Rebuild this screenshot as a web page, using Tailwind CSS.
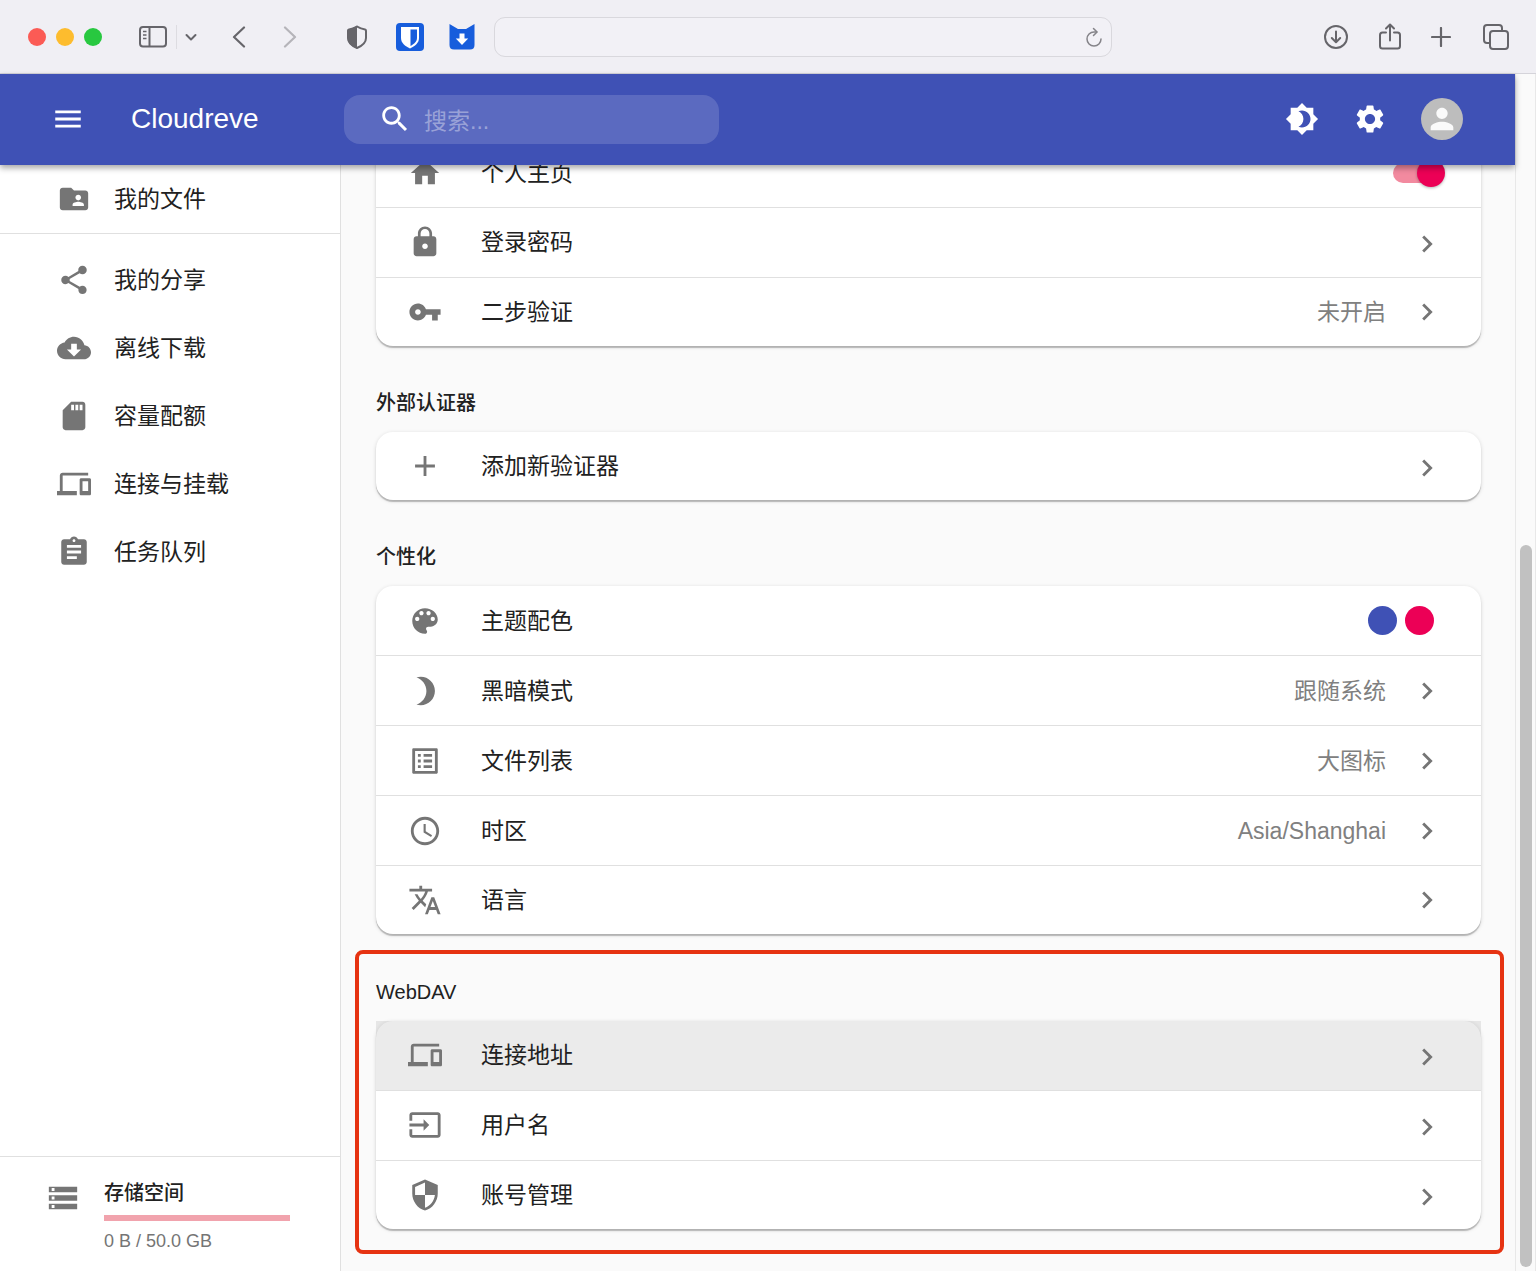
<!DOCTYPE html>
<html lang="zh-CN">
<head>
    <meta charset="UTF-8">
    <meta name="viewport" content="width=device-width, initial-scale=1.0">
    <title>Cloudreve</title>
    <script src="https://cdn.jsdelivr.net/npm/@tailwindcss/browser@4"></script>
</head>
<body class="h-screen flex flex-col overflow-hidden bg-[#fafafa] text-[#212121] text-[23px] leading-8 font-['Liberation_Sans','Noto_Sans_CJK_SC',sans-serif]">
<!-- 公用图标 -->
<svg class="hidden">
    <symbol id="next" viewBox="0 0 24 24"><path d="M10 6L8.59 7.41 13.17 12l-4.58 4.59L10 18l6-6z"/></symbol>
    <symbol id="devices" viewBox="0 0 24 24"><path d="M4 6h18V4H4c-1.1 0-2 .9-2 2v11H0v3h14v-3H4V6zm19 2h-6c-.55 0-1 .45-1 1v10c0 .55.45 1 1 1h6c.55 0 1-.45 1-1V9c0-.55-.45-1-1-1zm-1 9h-4v-7h4v7z"/></symbol>
</svg>

<!-- 浏览器工具栏 -->
<div class="h-[74px] shrink-0 flex items-center pl-7 pr-[27px] bg-[#f0eff4] border-b border-[#d5d4da] text-[#66656a]">
    <div class="flex gap-[10px]">
        <span class="size-[18px] rounded-full bg-[#fb5b55]"></span>
        <span class="size-[18px] rounded-full bg-[#fdbc2e]"></span>
        <span class="size-[18px] rounded-full bg-[#28c840]"></span>
    </div>
    <button class="ml-[37px]" aria-label="边栏">
        <svg class="w-7 h-6" viewBox="0 0 28 24" fill="none" stroke="currentColor" stroke-width="2"><rect x="1" y="2" width="26" height="19.500" rx="3"/><path d="M10.500 2v19.500"/><path d="M4 6.500h3.500M4 10h3.500M4 13.500h3.500" stroke-width="1.500"/></svg>
    </button>
    <span class="ml-[9px] w-px h-6 bg-[#dddce1]"></span>
    <button class="ml-2" aria-label="标签页组">
        <svg class="w-3 h-3" viewBox="0 0 12 12" fill="none" stroke="currentColor" stroke-width="2" stroke-linecap="round" stroke-linejoin="round"><path d="M1.500 4L6 8.500 10.500 4"/></svg>
    </button>
    <button class="ml-[35px]" aria-label="后退">
        <svg class="w-[14px] h-[22px]" viewBox="0 0 14 22" fill="none" stroke="currentColor" stroke-width="2.200" stroke-linecap="round" stroke-linejoin="round"><path d="M12 1.500L2 11l10 9.500"/></svg>
    </button>
    <button class="ml-[37px] text-[#b5b4b9]" aria-label="前进">
        <svg class="w-[14px] h-[22px]" viewBox="0 0 14 22" fill="none" stroke="currentColor" stroke-width="2.200" stroke-linecap="round" stroke-linejoin="round"><path d="M2 1.500L12 11 2 20.500"/></svg>
    </button>
    <button class="ml-[49px]" aria-label="隐私报告">
        <svg class="w-[22px] h-6" viewBox="0 0 22 24"><path d="M11 1.500c2.500 1.600 5 2.600 8 3 .7.200 1 .6 1 1.300V13c0 5-3.800 7.800-9 10-5.200-2.200-9-5-9-10V5.800c0-.7.300-1.100 1-1.300 3-.4 5.500-1.400 8-3z" fill="none" stroke="currentColor" stroke-width="2"/><path d="M11 1v22.500C5 21 1.500 18 1.500 13V5z" fill="currentColor"/></svg>
    </button>
    <button class="ml-7" aria-label="Bitwarden">
        <svg class="size-7" viewBox="0 0 28 28"><rect width="28" height="28" rx="4" fill="#175ddc"/><path d="M5 4h18v11c0 5-4 8-9 10.500C9 23 5 20 5 15z" fill="#fff"/><path d="M14.500 6.500H21V15c0 3.500-2.800 5.800-6.500 8z" fill="#175ddc"/></svg>
    </button>
    <button class="ml-6" aria-label="下载器">
        <svg class="size-7" viewBox="0 0 28 28"><path d="M1.500 1l8.500 5h8l8.500-5v21c0 3-1.500 4.500-4.500 4.500H6C3 26.500 1.500 25 1.500 22z" fill="#175ddc"/><path d="M11.500 10.500h5v5h3.700L14 22l-6.200-6.500h3.700z" fill="#fff"/></svg>
    </button>
    <div class="ml-[18px] flex-1 h-10 flex items-center pr-[9px] rounded-[11px] border border-[#d9d8dd] bg-[#f2f1f6]">
        <input type="text" aria-label="地址" class="flex-1 min-w-0 h-full px-4 text-base outline-none">
        <button aria-label="重新载入">
            <svg class="w-4 h-5" viewBox="0 0 16 20" fill="none" stroke="#858489" stroke-width="1.500" stroke-linecap="round"><path d="M15 12a7 7 0 1 1-7-7h2.500"/><path d="M7.500 1.500L11 5 7.500 8.500"/></svg>
        </button>
    </div>
    <div class="ml-[211px] flex items-center">
        <button aria-label="下载">
            <svg class="size-[26px]" viewBox="0 0 26 26" fill="none" stroke="currentColor" stroke-width="2" stroke-linecap="round" stroke-linejoin="round"><circle cx="13" cy="13" r="11"/><path d="M13 7.500v10.500M8.800 14l4.200 4.200 4.200-4.200"/></svg>
        </button>
        <button class="ml-[29px]" aria-label="共享">
            <svg class="w-6 h-7" viewBox="0 0 24 28" fill="none" stroke="currentColor" stroke-width="2" stroke-linecap="round" stroke-linejoin="round"><path d="M8 9.500H4.500c-1.700 0-2.500.8-2.500 2.500v11c0 1.700.8 2.500 2.500 2.500h15c1.700 0 2.500-.8 2.500-2.500V12c0-1.700-.8-2.500-2.500-2.500H16"/><path d="M12 17.500V1.500M8 5.500l4-4 4 4"/></svg>
        </button>
        <button class="ml-[29px]" aria-label="新建标签页">
            <svg class="size-5" viewBox="0 0 20 20" fill="none" stroke="currentColor" stroke-width="2.200" stroke-linecap="round"><path d="M10 1v18M1 10h18"/></svg>
        </button>
        <button class="ml-8" aria-label="标签页概览">
            <svg class="size-[26px]" viewBox="0 0 26 26" fill="none" stroke="currentColor" stroke-width="2"><rect x="7" y="7" width="18" height="18" rx="3"/><path d="M7 19H4c-2 0-3-1-3-3V4c0-2 1-3 3-3h12c2 0 3 1 3 3v3"/></svg>
        </button>
    </div>
</div>

<div class="flex-1 min-h-0 flex">
    <div class="flex-1 min-w-0 flex flex-col">
        <!-- 顶栏 -->
        <header class="relative z-10 h-[91px] shrink-0 flex items-center pb-px pl-[51px] pr-[52px] bg-[#3f51b5] text-white shadow-[0_3px_6px_rgba(0,0,0,0.35)]">
            <button aria-label="菜单">
                <svg class="size-[34px]" viewBox="0 0 24 24" fill="currentColor"><path d="M3 18h18v-2H3v2zm0-5h18v-2H3v2zm0-7v2h18V6H3z"/></svg>
            </button>
            <h1 class="ml-[46px] w-[213px] text-[28px]">Cloudreve</h1>
            <label class="w-[375px] h-[49px] flex items-center gap-3 pl-[34px] rounded-2xl bg-white/15">
                <svg class="size-[34px] shrink-0" viewBox="0 0 24 24" fill="currentColor"><path d="M15.500 14h-.79l-.28-.27C15.410 12.590 16 11.110 16 9.500 16 5.910 13.090 3 9.500 3S3 5.910 3 9.500 5.910 16 9.500 16c1.610 0 3.090-.59 4.230-1.570l.27.28v.79l5 4.990L20.490 19l-4.990-5zm-6 0C7.010 14 5 11.990 5 9.500S7.010 5 9.500 5 14 7.010 14 9.500 11.990 14 9.500 14z"/></svg>
                <input type="text" placeholder="搜索..." aria-label="搜索" class="flex-1 min-w-0 pt-1 outline-none placeholder:text-white/40">
            </label>
            <div class="ml-auto flex items-center gap-[34px]">
                <button aria-label="切换主题">
                    <svg class="size-[34px]" viewBox="0 0 24 24" fill="currentColor"><path d="M20 8.690V4h-4.690L12 .69 8.690 4H4v4.690L.69 12 4 15.310V20h4.690L12 23.310 15.310 20H20v-4.690L23.310 12 20 8.690zM12 18c-.89 0-1.740-.2-2.500-.55C11.560 16.500 13 14.420 13 12s-1.440-4.500-3.500-5.450C10.260 6.200 11.110 6 12 6c3.310 0 6 2.690 6 6s-2.690 6-6 6z"/></svg>
                </button>
                <button aria-label="设置">
                    <svg class="size-[34px]" viewBox="0 0 24 24" fill="currentColor"><path d="M19.140 12.940c.04-.3.06-.61.06-.94 0-.32-.02-.64-.07-.94l2.030-1.580c.18-.14.23-.41.12-.61l-1.920-3.320c-.12-.22-.37-.29-.59-.22l-2.390.96c-.5-.38-1.030-.7-1.620-.94l-.36-2.540c-.04-.24-.24-.41-.48-.41h-3.840c-.24 0-.43.17-.47.41l-.36 2.540c-.59.24-1.130.57-1.620.94l-2.390-.96c-.22-.08-.47 0-.59.22L2.740 8.870c-.12.21-.08.47.12.61l2.030 1.580c-.05.3-.09.63-.09.94s.02.64.07.94l-2.030 1.580c-.18.14-.23.41-.12.61l1.920 3.320c.12.22.37.29.59.22l2.390-.96c.5.38 1.030.7 1.620.94l.36 2.540c.05.24.24.41.48.41h3.840c.24 0 .44-.17.47-.41l.36-2.540c.59-.24 1.130-.56 1.620-.94l2.390.96c.22.08.47 0 .59-.22l1.920-3.320c.12-.22.07-.47-.12-.61l-2.010-1.580zM12 15.600c-1.980 0-3.600-1.620-3.600-3.600s1.620-3.600 3.600-3.600 3.600 1.620 3.600 3.600-1.620 3.600-3.600 3.600z"/></svg>
                </button>
                <button class="size-[42px] flex items-center justify-center rounded-full bg-[#bdbdbd]" aria-label="账户">
                    <svg class="size-[34px]" viewBox="0 0 24 24" fill="#fafafa"><path d="M12 12c2.210 0 4-1.790 4-4s-1.790-4-4-4-4 1.790-4 4 1.790 4 4 4zm0 2c-2.670 0-8 1.340-8 4v2h16v-2c0-2.660-5.330-4-8-4z"/></svg>
                </button>
            </div>
        </header>

        <div class="flex-1 min-h-0 flex">
            <!-- 侧边栏 -->
            <aside class="w-[341px] shrink-0 flex flex-col bg-white border-r border-[#e0e0e0]">
                <nav class="flex-1">
                    <a href="#" class="h-[69px] flex items-center gap-[23px] pl-[57px] border-b border-[#e0e0e0]">
                        <svg class="size-[34px]" viewBox="0 0 24 24" fill="#757575"><path d="M20 6h-8l-2-2H4c-1.100 0-1.990.9-1.990 2L2 18c0 1.100.9 2 2 2h16c1.100 0 2-.9 2-2V8c0-1.100-.9-2-2-2zm-5 3c1.100 0 2 .9 2 2s-.9 2-2 2-2-.9-2-2 .9-2 2-2zm4 8h-8v-1c0-1.330 2.670-2 4-2s4 .67 4 2v1z"/></svg>
                        <span>我的文件</span>
                    </a>
                    <div class="pt-3">
                        <a href="#" class="h-[68px] flex items-center gap-[23px] pl-[57px]">
                            <svg class="size-[34px]" viewBox="0 0 24 24" fill="#757575"><path d="M18 16.080c-.76 0-1.440.3-1.960.77L8.910 12.700c.05-.23.09-.46.09-.7s-.04-.47-.09-.7l7.050-4.110c.54.5 1.250.81 2.040.81 1.660 0 3-1.340 3-3s-1.340-3-3-3-3 1.340-3 3c0 .24.04.47.09.7L8.040 9.810C7.500 9.310 6.790 9 6 9c-1.660 0-3 1.340-3 3s1.340 3 3 3c.79 0 1.500-.31 2.040-.81l7.120 4.160c-.05.21-.08.43-.08.65 0 1.610 1.310 2.920 2.920 2.920 1.610 0 2.920-1.310 2.920-2.920s-1.310-2.920-2.920-2.920z"/></svg>
                            <span>我的分享</span>
                        </a>
                        <a href="#" class="h-[68px] flex items-center gap-[23px] pl-[57px]">
                            <svg class="size-[34px]" viewBox="0 0 24 24" fill="#757575"><path d="M19.350 10.040C18.670 6.590 15.640 4 12 4 9.110 4 6.600 5.640 5.350 8.040 2.340 8.360 0 10.910 0 14c0 3.310 2.690 6 6 6h13c2.760 0 5-2.240 5-5 0-2.640-2.050-4.780-4.650-4.960zM17 13l-5 5-5-5h3V9h4v4h3z"/></svg>
                            <span>离线下载</span>
                        </a>
                        <a href="#" class="h-[68px] flex items-center gap-[23px] pl-[57px]">
                            <svg class="size-[34px]" viewBox="0 0 24 24" fill="#757575"><path d="M18 2h-8L4.020 8 4 20c0 1.100.9 2 2 2h12c1.100 0 2-.9 2-2V4c0-1.100-.9-2-2-2zm-6 6h-2V4h2v4zm3 0h-2V4h2v4zm3 0h-2V4h2v4z"/></svg>
                            <span>容量配额</span>
                        </a>
                        <a href="#" class="h-[68px] flex items-center gap-[23px] pl-[57px]">
                            <svg class="size-[34px]" fill="#757575"><use href="#devices"/></svg>
                            <span>连接与挂载</span>
                        </a>
                        <a href="#" class="h-[68px] flex items-center gap-[23px] pl-[57px]">
                            <svg class="size-[34px]" viewBox="0 0 24 24" fill="#757575"><path d="M19 3h-4.180C14.400 1.840 13.300 1 12 1c-1.300 0-2.400.84-2.820 2H5c-1.100 0-2 .9-2 2v14c0 1.100.9 2 2 2h14c1.100 0 2-.9 2-2V5c0-1.100-.9-2-2-2zm-7 0c.55 0 1 .45 1 1s-.45 1-1 1-1-.45-1-1 .45-1 1-1zm2 14H7v-2h7v2zm3-4H7v-2h10v2zm0-4H7V7h10v2z"/></svg>
                            <span>任务队列</span>
                        </a>
                    </div>
                </nav>
                <!-- 存储空间 -->
                <div class="flex gap-6 pl-[46px] pr-[50px] pt-[22px] pb-[18px] border-t border-[#e0e0e0]">
                    <svg class="size-[34px] mt-[2px]" viewBox="0 0 24 24" fill="#757575"><path d="M2 20h20v-4H2v4zm2-3h2v2H4v-2zM2 4v4h20V4H2zm4 3H4V5h2v2zm-4 7h20v-4H2v4zm2-3h2v2H4v-2z"/></svg>
                    <div class="flex-1">
                        <h2 class="text-xl leading-7 font-medium">存储空间</h2>
                        <div class="mt-2 h-[6px] bg-[#f1a3ad]"></div>
                        <p class="mt-2 text-lg leading-6 text-[#757575]">0 B / 50.0 GB</p>
                    </div>
                </div>
            </aside>

            <!-- 设置 -->
            <main class="flex-1 min-w-0 overflow-hidden pl-[35px] pr-[34px]">
                <div class="-mt-[27px] rounded-[17px] bg-white shadow-[0_2px_1px_rgba(0,0,0,0.22),0_1px_4px_rgba(0,0,0,0.14)]">
                    <div class="h-[70px] flex items-center gap-[39px] pl-8 pr-10 border-b border-[#e0e0e0]">
                        <svg class="size-[34px]" viewBox="0 0 24 24" fill="#757575"><path d="M10 20v-6h4v6h5v-8h3L12 3 2 12h3v8z"/></svg>
                        <label for="homepage" class="flex-1">个人主页</label>
                        <input type="checkbox" id="homepage" checked class="relative appearance-none w-12 h-5 rounded-full bg-[#f28a9f] after:absolute after:-right-1 after:-top-1 after:size-7 after:rounded-full after:bg-[#ec0056] after:shadow-[0_1px_3px_rgba(0,0,0,0.3)]">
                    </div>
                    <button class="w-full h-[70px] flex items-center gap-[39px] pl-8 pr-[37px] pb-px text-left border-b border-[#e0e0e0]">
                        <svg class="size-[34px]" viewBox="0 0 24 24" fill="#757575"><path d="M18 8h-1V6c0-2.760-2.240-5-5-5S7 3.240 7 6v2H6c-1.100 0-2 .9-2 2v10c0 1.100.9 2 2 2h12c1.100 0 2-.9 2-2V10c0-1.100-.9-2-2-2zm-6 9c-1.100 0-2-.9-2-2s.9-2 2-2 2 .9 2 2-.9 2-2 2zm3.100-9H8.900V6c0-1.710 1.390-3.100 3.100-3.100 1.710 0 3.100 1.390 3.100 3.100v2z"/></svg>
                        <span class="flex-1">登录密码</span>
                        <span class="pt-1"><svg class="size-[34px]" fill="#757575"><use href="#next"/></svg></span>
                    </button>
                    <button class="w-full h-[68px] flex items-center gap-[39px] pl-8 pr-[37px] text-left">
                        <svg class="size-[34px]" viewBox="0 0 24 24" fill="#757575"><path d="M12.650 10C11.830 7.670 9.610 6 7 6c-3.310 0-6 2.690-6 6s2.690 6 6 6c2.610 0 4.830-1.670 5.650-4H17v4h4v-4h2v-4H12.650zM7 14c-1.100 0-2-.9-2-2s.9-2 2-2 2 .9 2 2-.9 2-2 2z"/></svg>
                        <span class="flex-1">二步验证</span>
                        <span class="flex items-center gap-6 text-[#808080]">未开启 <svg class="size-[34px]" fill="#757575"><use href="#next"/></svg></span>
                    </button>
                </div>

                <h2 class="pt-[43px] pb-[15px] text-xl leading-7 font-medium">外部认证器</h2>
                <div class="rounded-[17px] bg-white shadow-[0_2px_1px_rgba(0,0,0,0.22),0_1px_4px_rgba(0,0,0,0.14)]">
                    <button class="w-full h-[68px] flex items-center gap-[39px] pl-8 pr-[37px] text-left">
                        <svg class="size-[34px]" viewBox="0 0 24 24" fill="#757575"><path d="M19 13h-6v6h-2v-6H5v-2h6V5h2v6h6v2z"/></svg>
                        <span class="flex-1">添加新验证器</span>
                        <span class="pt-1"><svg class="size-[34px]" fill="#757575"><use href="#next"/></svg></span>
                    </button>
                </div>

                <h2 class="pt-[43px] pb-[15px] text-xl leading-7 font-medium">个性化</h2>
                <div class="rounded-[17px] bg-white shadow-[0_2px_1px_rgba(0,0,0,0.22),0_1px_4px_rgba(0,0,0,0.14)]">
                    <button class="w-full h-[70px] flex items-center gap-[39px] pl-8 pr-[47px] text-left border-b border-[#e0e0e0]">
                        <svg class="size-[34px]" viewBox="0 0 24 24" fill="#757575"><path d="M12 3c-4.970 0-9 4.030-9 9s4.030 9 9 9c.83 0 1.500-.67 1.500-1.500 0-.39-.15-.74-.39-1.010-.23-.26-.38-.61-.38-.99 0-.83.67-1.500 1.500-1.500H16c2.760 0 5-2.240 5-5 0-4.420-4.030-8-9-8zm-5.500 9c-.83 0-1.500-.67-1.500-1.500S5.670 9 6.500 9 8 9.670 8 10.500 7.330 12 6.500 12zm3-4C8.670 8 8 7.330 8 6.500S8.670 5 9.500 5s1.500.67 1.500 1.500S10.330 8 9.500 8zm5 0c-.83 0-1.500-.67-1.500-1.500S13.670 5 14.500 5s1.500.67 1.500 1.500S15.330 8 14.500 8zm3 4c-.83 0-1.500-.67-1.500-1.500S16.670 9 17.500 9s1.500.67 1.500 1.500-.67 1.500-1.500 1.500z"/></svg>
                        <span class="flex-1">主题配色</span>
                        <span class="flex gap-2">
                            <span class="size-[29px] rounded-full bg-[#3f51b5]"></span>
                            <span class="size-[29px] rounded-full bg-[#ec0056]"></span>
                        </span>
                    </button>
                    <button class="w-full h-[70px] flex items-center gap-[39px] pl-8 pr-[37px] text-left border-b border-[#e0e0e0]">
                        <svg class="size-[34px]" viewBox="0 0 24 24" fill="#757575"><path d="M9 2c-1.050 0-2.050.16-3 .46 4.060 1.270 7 5.060 7 9.540 0 4.480-2.940 8.270-7 9.540.95.3 1.950.46 3 .46 5.520 0 10-4.480 10-10S14.520 2 9 2z"/></svg>
                        <span class="flex-1">黑暗模式</span>
                        <span class="flex items-center gap-6 text-[#808080]">跟随系统 <svg class="size-[34px]" fill="#757575"><use href="#next"/></svg></span>
                    </button>
                    <button class="w-full h-[70px] flex items-center gap-[39px] pl-8 pr-[37px] text-left border-b border-[#e0e0e0]">
                        <svg class="size-[34px]" viewBox="0 0 24 24" fill="#757575"><path d="M19 5v14H5V5h14m1.100-2H3.900c-.5 0-.9.4-.9.9v16.200c0 .4.4.9.9.9h16.200c.4 0 .9-.5.9-.9V3.900c0-.5-.5-.9-.9-.9zM11 7h6v2h-6V7zm0 4h6v2h-6v-2zm0 4h6v2h-6zM7 7h2v2H7zm0 4h2v2H7zm0 4h2v2H7z"/></svg>
                        <span class="flex-1">文件列表</span>
                        <span class="flex items-center gap-6 text-[#808080]">大图标 <svg class="size-[34px]" fill="#757575"><use href="#next"/></svg></span>
                    </button>
                    <button class="w-full h-[70px] flex items-center gap-[39px] pl-8 pr-[37px] text-left border-b border-[#e0e0e0]">
                        <svg class="size-[34px]" viewBox="0 0 24 24" fill="#757575"><path d="M11.990 2C6.470 2 2 6.480 2 12s4.470 10 9.990 10C17.520 22 22 17.520 22 12S17.520 2 11.990 2zM12 20c-4.420 0-8-3.580-8-8s3.580-8 8-8 8 3.580 8 8-3.580 8-8 8z"/><path d="M12.500 7H11v6l5.250 3.150.75-1.230-4.500-2.670z"/></svg>
                        <span class="flex-1">时区</span>
                        <span class="flex items-center gap-6 text-[#808080]">Asia/Shanghai <svg class="size-[34px]" fill="#757575"><use href="#next"/></svg></span>
                    </button>
                    <button class="w-full h-[68px] flex items-center gap-[39px] pl-8 pr-[37px] text-left">
                        <svg class="size-[34px]" viewBox="0 0 24 24" fill="#757575"><path d="M12.870 15.070l-2.540-2.510.03-.03c1.740-1.940 2.980-4.170 3.710-6.530H17V4h-7V2H8v2H1v1.990h11.170C11.500 7.920 10.440 9.750 9 11.350 8.070 10.320 7.300 9.190 6.690 8h-2c.73 1.630 1.730 3.170 2.980 4.560l-5.090 5.020L4 19l5-5 3.110 3.110.76-2.040zM18.500 10h-2L12 22h2l1.120-3h4.750L21 22h2l-4.500-12zm-2.620 7l1.620-4.330L19.120 17h-3.240z"/></svg>
                        <span class="flex-1">语言</span>
                        <svg class="size-[34px]" fill="#757575"><use href="#next"/></svg>
                    </button>
                </div>

                <!-- WebDAV -->
                <section class="mt-4 -ml-[21px] -mr-[23px] pt-6 pb-[21px] pl-[17px] pr-[19px] rounded-lg border-4 border-[#e63312]">
                    <h2 class="pb-[15px] text-xl leading-7 font-medium">WebDAV</h2>
                    <div class="rounded-[17px] bg-white shadow-[0_2px_1px_rgba(0,0,0,0.22),0_1px_4px_rgba(0,0,0,0.14)]">
                        <button class="w-full h-[70px] flex items-center gap-[39px] pl-8 pr-[37px] pb-px text-left border-b border-[#e0e0e0] bg-black/8">
                            <svg class="size-[34px]" fill="#757575"><use href="#devices"/></svg>
                            <span class="flex-1">连接地址</span>
                            <span class="pt-1"><svg class="size-[34px]" fill="#757575"><use href="#next"/></svg></span>
                        </button>
                        <button class="w-full h-[70px] flex items-center gap-[39px] pl-8 pr-[37px] pb-px text-left border-b border-[#e0e0e0]">
                            <svg class="size-[34px]" viewBox="0 0 24 24" fill="#757575"><path d="M21 3.010H3c-1.100 0-2 .9-2 2V9h2V4.990h18v14.030H3V15H1v4.010c0 1.100.9 1.980 2 1.980h18c1.100 0 2-.88 2-1.980v-14c0-1.110-.9-2-2-2zM11 16l4-4-4-4v3H1v2h10v3z"/></svg>
                            <span class="flex-1">用户名</span>
                            <span class="pt-1"><svg class="size-[34px]" fill="#757575"><use href="#next"/></svg></span>
                        </button>
                        <button class="w-full h-[68px] flex items-center gap-[39px] pl-8 pr-[37px] text-left">
                            <svg class="size-[34px]" viewBox="0 0 24 24" fill="#757575"><path d="M12 1L3 5v6c0 5.550 3.840 10.740 9 12 5.160-1.260 9-6.450 9-12V5l-9-4zm0 10.990h7c-.53 4.120-3.280 7.790-7 8.940V12H5V6.300l7-3.110v8.800z"/></svg>
                            <span class="flex-1">账号管理</span>
                            <span class="pt-1"><svg class="size-[34px]" fill="#757575"><use href="#next"/></svg></span>
                        </button>
                    </div>
                </section>
            </main>
        </div>
    </div>

    <!-- 滚动条 -->
    <div class="w-[21px] shrink-0 flex flex-col justify-end items-center pb-1 border-x border-[#e8e8e8] bg-[#fafafa]">
        <div class="w-3 h-[60.500%] rounded-full bg-[#c1c1c1]"></div>
    </div>
</div>
</body>
</html>
